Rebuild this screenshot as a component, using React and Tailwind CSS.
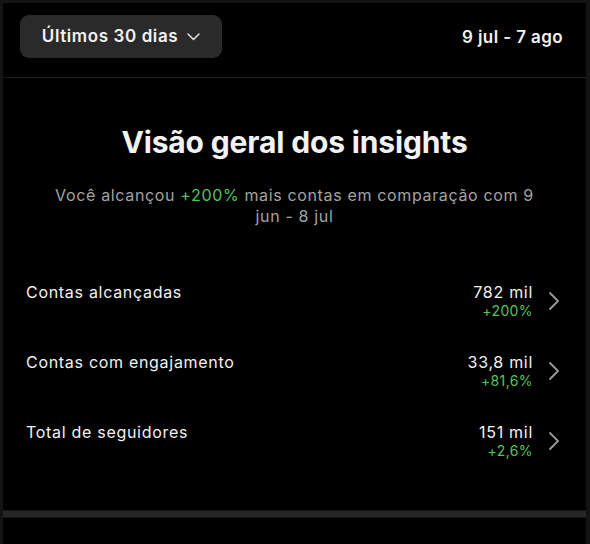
import React from 'react';

const rows = [
  { label: 'Contas alcançadas', value: '782 mil', delta: '+200%' },
  { label: 'Contas com engajamento', value: '33,8 mil', delta: '+81,6%' },
  { label: 'Total de seguidores', value: '151 mil', delta: '+2,6%' },
];

function Chevron() {
  return (
    <svg width="12" height="20" viewBox="0 0 12 20" fill="none" className="shrink-0">
      <path d="M2 2l8 8-8 8" stroke="#9a9a9a" strokeWidth="1.8" strokeLinecap="round" strokeLinejoin="round" />
    </svg>
  );
}

export default function App() {
  return (
    <div
      className="w-[590px] h-[544px] bg-black border-t-[3px] border-l-[3px] border-r-4 border-[#141414] flex flex-col overflow-hidden text-[#f2f2f2]"
      style={{ fontFamily: 'Inter, "Noto Sans", sans-serif' }}
    >
      {/* top bar */}
      <div className="flex items-center justify-between pl-[17px] pr-[23px] h-[75px] border-b border-[#1c1c1c]">
        <button className="flex items-center gap-[9px] h-[43px] w-[202px] -mt-[7px] justify-center rounded-[9px] bg-[#2a2a2a] text-[17px] font-semibold tracking-[0.6px]">
          <span>Últimos 30 dias</span>
          <svg width="13" height="8" viewBox="0 0 13 8" fill="none">
            <path d="M1 1l5.5 5.5L12 1" stroke="#e0e0e0" strokeWidth="1.5" strokeLinecap="round" strokeLinejoin="round" />
          </svg>
        </button>
        <span className="text-[17px] font-semibold tracking-[0.4px] -mt-[4px]">9 jul - 7 ago</span>
      </div>

      {/* overview */}
      <div className="flex flex-col items-center pt-[46px]">
        <h1 className="text-[30px] leading-[36px] font-bold tracking-[-0.15px]">Visão geral dos insights</h1>
        <p className="mt-[25px] w-[500px] text-center text-[16px] leading-[21px] tracking-[0.65px] text-[#a3a3a3]">
          Você alcançou <span className="text-[#52c655]">+200%</span> mais contas em comparação com 9 jun - 8 jul
        </p>
      </div>

      <div className="flex flex-col gap-[32px] pt-[55px] pl-[23px] pr-[26px]">
        {rows.map((r) => (
          <div key={r.label} className="flex items-start">
            <span className="flex-1 text-[16px] leading-[20px] tracking-[0.7px]">{r.label}</span>
            <div className="flex flex-col items-end">
              <span className="text-[16px] leading-[20px] tracking-[0.7px]">{r.value}</span>
              <span className="text-[14px] leading-[18px] tracking-[0.4px] text-[#52c655]">{r.delta}</span>
            </div>
            <div className="ml-[15px] mt-[9px]">
              <Chevron />
            </div>
          </div>
        ))}
      </div>

      <div className="flex-1" />
      <div className="h-[8px] bg-[#262626] border-y border-[#161616] mb-[26px]" />
    </div>
  );
}
